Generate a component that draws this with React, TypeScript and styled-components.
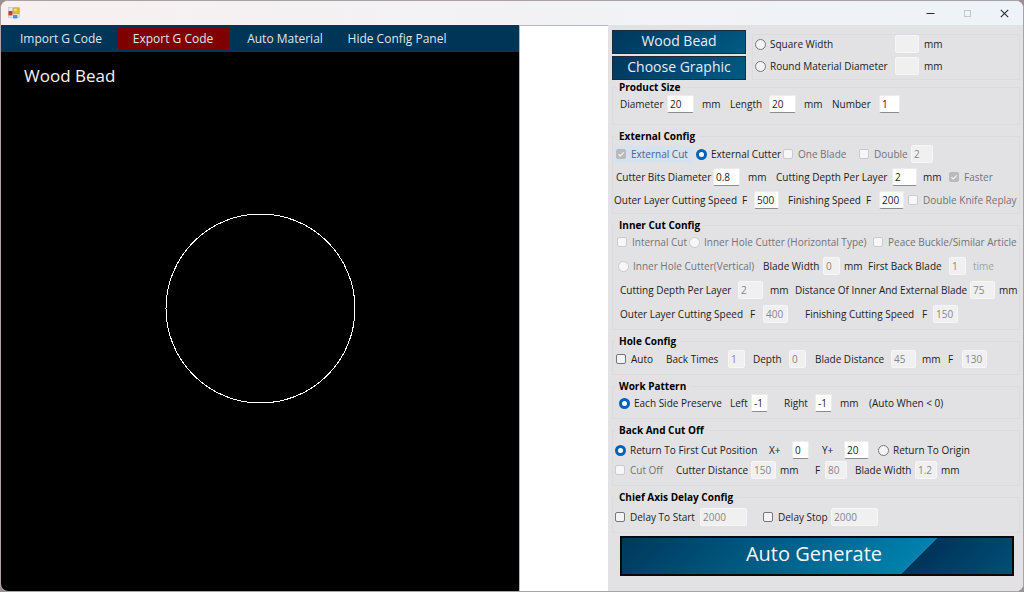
import React from "react";
import styled, { createGlobalStyle, css } from "styled-components";

const GlobalStyle = createGlobalStyle`
  * { box-sizing: border-box; }
  body {
    margin: 0;
    background: #9c9092;
    font-family: "Open Sans", "Noto Sans", sans-serif;
    font-size: 10px;
    line-height: 16px;
    color: #1c1c22;
  }
  button, input { font: inherit; color: inherit; margin: 0; }
`;

const AppWindow = styled.div`
  display: flex;
  flex-direction: column;
  min-height: 100vh;
  border: 1px solid #a9a2a6;
  border-radius: 8px;
  overflow: hidden;
  background: #ffffff;
`;

const TitleBar = styled.header`
  display: flex;
  align-items: center;
  justify-content: space-between;
  height: 24px;
  padding-left: 7px;
  background: linear-gradient(90deg, #f8f0f0 0%, #f3f2f4 40%, #f1f3f6 70%, #edf3f8 100%);
`;

const WindowControls = styled.div`
  display: flex;
`;

const ControlButton = styled.button`
  display: grid;
  place-items: center;
  width: 37px;
  height: 24px;
  padding: 0;
  border: 0;
  background: transparent;
  color: #2a2a2e;
  &:disabled { color: #c4c8cc; }
`;

const Workspace = styled.main`
  flex: 1;
  display: grid;
  grid-template-columns: minmax(0, 1fr) 89px 415px;
`;

const Viewer = styled.section`
  display: flex;
  flex-direction: column;
  background: #000000;
`;

const MenuBar = styled.nav`
  display: flex;
  align-items: center;
  height: 27px;
  padding-left: 4px;
  background: #003558;
`;

const MenuButton = styled.button<{ $active?: boolean }>`
  flex: 0 1 112px;
  height: 23px;
  padding: 0;
  border: 0;
  background: ${(p) => (p.$active ? "#800000" : "transparent")};
  color: #dfe6ee;
  font-size: 12px;
  white-space: nowrap;
`;

const Canvas = styled.div`
  flex: 1;
  display: grid;
`;

const CanvasTitle = styled.h1`
  grid-area: 1 / 1;
  align-self: start;
  margin: 0;
  padding: 12px 23px;
  color: #f4f4f4;
  font-size: 17px;
  font-weight: 400;
  line-height: 24px;
`;

const Preview = styled.svg`
  grid-area: 1 / 1;
  place-self: center;
  width: 192px;
  height: 192px;
  margin-bottom: 28px;
`;

const Gutter = styled.div`
  border-top: 1px solid #b4b8bc;
  border-left: 1px solid #b4b8bc;
  background: #ffffff;
`;

const ConfigPanel = styled.form`
  display: flex;
  flex-direction: column;
  gap: 4px;
  padding: 5px 3px 14px 4px;
  background: #e2e2e4;
`;

const MaterialSection = styled.div`
  display: grid;
  grid-template-columns: 134px 1fr;
  gap: 6px;
`;

const ShapeButtons = styled.div`
  display: grid;
  gap: 2px;
`;

const ShapeButton = styled.button`
  height: 24px;
  padding: 0 0 2px;
  border: 1px solid #1d2b36;
  background: linear-gradient(135deg, #00375d, #005b83);
  color: #e6eef4;
  font-size: 14px;
  line-height: 20px;
`;

const groupFrame = css`
  min-width: 0;
  margin: 0;
  border: 1px solid #dcdcdf;
`;

const MaterialGroup = styled.div`
  ${groupFrame}
  display: grid;
  gap: 4px;
  align-content: start;
  margin-top: 4px;
  padding-left: 2px;
`;

const Groups = styled.div`
  display: grid;
  gap: 4px;
  margin-top: -4px;
`;

const Group = styled.fieldset<{ $top?: number; $bottom?: number }>`
  ${groupFrame}
  padding: ${(p) => p.$top ?? 0}px 0 ${(p) => p.$bottom ?? 6}px 1px;
`;

const Legend = styled.legend`
  margin-left: 1px;
  padding: 0 4px;
  color: #000000;
  font-weight: 700;
  line-height: 15px;
`;

const Rows = styled.div<{ $gap?: number }>`
  display: grid;
  gap: ${(p) => p.$gap ?? 5}px;
`;

const Row = styled.div<{ $cols: string; $indent?: number }>`
  display: grid;
  grid-template-columns: ${(p) => p.$cols};
  align-items: center;
  height: 18px;
  padding-left: ${(p) => p.$indent ?? 0}px;
  white-space: nowrap;
`;

const Text = styled.label``;

const Unit = styled.span<{ $faded?: boolean }>`
  color: ${(p) => (p.$faded ? "#a2a2a6" : "inherit")};
`;

const NumberBox = styled.input<{ $width: number }>`
  width: ${(p) => p.$width}px;
  height: 18px;
  padding: 0 2px;
  border: 1px solid #ececee;
  border-bottom-color: #8c8c90;
  border-radius: 2px;
  background: #ffffff;
  &:disabled {
    border-color: #f6f6f6;
    background: #f0f0f0;
    color: #868688;
  }
`;

const ChoiceLabel = styled.label<{ $faded?: boolean; $hot?: boolean }>`
  display: flex;
  align-items: center;
  justify-self: start;
  gap: 5px;
  height: 17px;
  color: ${(p) => (p.$faded ? "#737377" : "inherit")};
  ${(p) =>
    p.$hot &&
    css`
      padding: 0 5px 0 2px;
      background: #d5e2f0;
      color: #47648c;
    `}
`;

const Mark = styled.input`
  flex: none;
  appearance: none;
  width: 10px;
  height: 10px;
  border: 1px solid #76767a;
  border-radius: 2px;
  background: #f3f3f4;
  &:disabled {
    border-color: #cbcbce;
    background: #f7f7f8;
  }
  &:checked:disabled {
    border-color: #bababd;
    background: #bababd;
  }
  &[type="radio"] {
    width: 11px;
    height: 11px;
    margin-right: -1px;
    border-radius: 50%;
  }
  &[type="radio"]:checked {
    border: 3px solid #0062b8;
    background: #ffffff;
  }
`;

const TickBox = styled.span`
  display: grid;
  flex: none;
  > * { grid-area: 1 / 1; }
`;

const Tick = styled.svg`
  width: 10px;
  height: 10px;
  pointer-events: none;
`;

const GenerateButton = styled.button`
  height: 40px;
  margin: -1px 6px 0 8px;
  padding: 0 6px 4px 0;
  border: 2px solid #05090c;
  background: linear-gradient(
    135deg,
    #00375b 0%,
    #005f88 40%,
    #0082ad 74%,
    #00335a 74%,
    #005077 100%
  );
  color: #f2f7fa;
  font-size: 20px;
  line-height: 28px;
`;

type ChoiceProps = {
  type: "checkbox" | "radio";
  name?: string;
  checked?: boolean;
  disabled?: boolean;
  hot?: boolean;
  children: React.ReactNode;
};

function Choice({ type, name, checked, disabled, hot, children }: ChoiceProps) {
  const mark = <Mark type={type} name={name} defaultChecked={checked} disabled={disabled} />;
  return (
    <ChoiceLabel $faded={disabled} $hot={hot}>
      {type === "checkbox" && checked ? (
        <TickBox>
          {mark}
          <Tick viewBox="0 0 10 10" fill="none" stroke="#f4f4f4" strokeWidth="1.2">
            <path d="M2.4 5.2 4.3 7 7.8 3.3" />
          </Tick>
        </TickBox>
      ) : (
        mark
      )}
      {children}
    </ChoiceLabel>
  );
}

function NumberField({ id, value = "", width, disabled }: { id: string; value?: string; width: number; disabled?: boolean }) {
  return <NumberBox id={id} type="text" defaultValue={value} $width={width} disabled={disabled} />;
}

function AppIcon() {
  return (
    <svg width="12" height="12" viewBox="0 0 12 12" aria-hidden="true">
      <rect x="0.5" y="0.5" width="11" height="10" fill="#e4e6ea" stroke="#b9bcc4" strokeWidth="0.6" />
      <rect x="0.5" y="4" width="4" height="4.4" fill="#c23a34" />
      <rect x="5" y="1" width="6" height="5.6" rx="0.5" fill="#e9bd2c" stroke="#b48a16" strokeWidth="0.5" />
      <rect x="6" y="1.6" width="2.6" height="2" fill="#f8e48a" />
      <rect x="5" y="8" width="4.4" height="3.4" rx="0.6" fill="#4f8fe0" />
    </svg>
  );
}

export default function App() {
  return (
    <>
      <GlobalStyle />
      <AppWindow>
        <TitleBar>
          <AppIcon />
          <WindowControls>
            <ControlButton type="button" aria-label="Minimize">
              <svg width="9" height="9" viewBox="0 0 9 9" stroke="currentColor">
                <path d="M0.5 4.5h8" />
              </svg>
            </ControlButton>
            <ControlButton type="button" aria-label="Maximize" disabled>
              <svg width="9" height="9" viewBox="0 0 9 9" fill="none" stroke="currentColor">
                <rect x="1.5" y="1.5" width="6" height="6" />
              </svg>
            </ControlButton>
            <ControlButton type="button" aria-label="Close">
              <svg width="9" height="9" viewBox="0 0 9 9" stroke="currentColor" strokeWidth="1.1">
                <path d="M0.8 0.8 8.2 8.2M8.2 0.8 0.8 8.2" />
              </svg>
            </ControlButton>
          </WindowControls>
        </TitleBar>

        <Workspace>
          <Viewer>
            <MenuBar>
              <MenuButton type="button">Import G Code</MenuButton>
              <MenuButton type="button" $active>Export G Code</MenuButton>
              <MenuButton type="button">Auto Material</MenuButton>
              <MenuButton type="button">Hide Config Panel</MenuButton>
            </MenuBar>
            <Canvas>
              <CanvasTitle>Wood Bead</CanvasTitle>
              <Preview viewBox="0 0 192 192" fill="none" stroke="#ffffff" shapeRendering="crispEdges">
                <circle cx="96.5" cy="96.5" r="94.5" />
              </Preview>
            </Canvas>
          </Viewer>

          <Gutter />

          <ConfigPanel>
            <MaterialSection>
              <ShapeButtons>
                <ShapeButton type="button">Wood Bead</ShapeButton>
                <ShapeButton type="button">Choose Graphic</ShapeButton>
              </ShapeButtons>
              <MaterialGroup>
                <Row $cols="140px 29px auto">
                  <Choice type="radio" name="material">Square Width</Choice>
                  <NumberBox aria-label="Square Width" $width={24} disabled />
                  <Unit>mm</Unit>
                </Row>
                <Row $cols="140px 29px auto">
                  <Choice type="radio" name="material">Round Material Diameter</Choice>
                  <NumberBox aria-label="Round Material Diameter" $width={24} disabled />
                  <Unit>mm</Unit>
                </Row>
              </MaterialGroup>
            </MaterialSection>

            <Groups>
              <Group $bottom={11}>
                <Legend>Product Size</Legend>
                <Row $indent={6} $cols="47px 35px 28px 39px 35px 28px 47px auto">
                  <Text htmlFor="diameter">Diameter</Text>
                  <NumberField id="diameter" value="20" width={27} />
                  <Unit>mm</Unit>
                  <Text htmlFor="length">Length</Text>
                  <NumberField id="length" value="20" width={27} />
                  <Unit>mm</Unit>
                  <Text htmlFor="number">Number</Text>
                  <NumberField id="number" value="1" width={21} />
                </Row>
              </Group>

              <Group $top={1} $bottom={4}>
                <Legend>External Config</Legend>
                <Rows>
                  <Row $cols="82px 87px 76px 52px auto">
                    <Choice type="checkbox" checked disabled hot>External Cut</Choice>
                    <Choice type="radio" name="external" checked>External Cutter</Choice>
                    <Choice type="checkbox" disabled>One Blade</Choice>
                    <Choice type="checkbox" disabled>Double</Choice>
                    <NumberBox aria-label="Double" defaultValue="2" $width={22} disabled />
                  </Row>
                  <Row $indent={2} $cols="97px 35px 28px 116px 31px 26px auto">
                    <Text htmlFor="bits">Cutter Bits Diameter</Text>
                    <NumberField id="bits" value="0.8" width={27} />
                    <Unit>mm</Unit>
                    <Text htmlFor="outer-depth">Cutting Depth Per Layer</Text>
                    <NumberField id="outer-depth" value="2" width={25} />
                    <Unit>mm</Unit>
                    <Choice type="checkbox" checked disabled>Faster</Choice>
                  </Row>
                  <Row $cols="128px 12px 34px 78px 13px 29px auto">
                    <Text htmlFor="outer-speed">Outer Layer Cutting Speed</Text>
                    <Unit>F</Unit>
                    <NumberField id="outer-speed" value="500" width={25} />
                    <Text htmlFor="finish-speed">Finishing Speed</Text>
                    <Unit>F</Unit>
                    <NumberField id="finish-speed" value="200" width={25} />
                    <Choice type="checkbox" disabled>Double Knife Replay</Choice>
                  </Row>
                </Rows>
              </Group>

              <Group>
                <Legend>Inner Cut Config</Legend>
                <Rows $gap={6}>
                  <Row $indent={3} $cols="72px 184px auto">
                    <Choice type="checkbox" disabled>Internal Cut</Choice>
                    <Choice type="radio" name="inner" disabled>Inner Hole Cutter (Horizontal Type)</Choice>
                    <Choice type="checkbox" disabled>Peace Buckle/Similar Article</Choice>
                  </Row>
                  <Row $indent={4} $cols="145px 60px 21px 24px 81px 24px auto">
                    <Choice type="radio" name="inner" disabled>Inner Hole Cutter(Vertical)</Choice>
                    <Text htmlFor="inner-width">Blade Width</Text>
                    <NumberField id="inner-width" value="0" width={17} disabled />
                    <Unit>mm</Unit>
                    <Text htmlFor="first-back">First Back Blade</Text>
                    <NumberField id="first-back" value="1" width={17} disabled />
                    <Unit $faded>time</Unit>
                  </Row>
                  <Row $indent={6} $cols="118px 32px 25px 175px 29px auto">
                    <Text htmlFor="inner-depth">Cutting Depth Per Layer</Text>
                    <NumberField id="inner-depth" value="2" width={25} disabled />
                    <Unit>mm</Unit>
                    <Text htmlFor="blade-gap">Distance Of Inner And External Blade</Text>
                    <NumberField id="blade-gap" value="75" width={25} disabled />
                    <Unit>mm</Unit>
                  </Row>
                  <Row $indent={6} $cols="130px 13px 42px 117px 11px auto">
                    <Text htmlFor="inner-speed">Outer Layer Cutting Speed</Text>
                    <Unit>F</Unit>
                    <NumberField id="inner-speed" value="400" width={25} disabled />
                    <Text htmlFor="inner-finish">Finishing Cutting Speed</Text>
                    <Unit>F</Unit>
                    <NumberField id="inner-finish" value="150" width={25} disabled />
                  </Row>
                </Rows>
              </Group>

              <Group $top={1}>
                <Legend>Hole Config</Legend>
                <Row $indent={2} $cols="50px 62px 25px 36px 26px 76px 31px 26px 14px auto">
                  <Choice type="checkbox">Auto</Choice>
                  <Text htmlFor="back-times">Back Times</Text>
                  <NumberField id="back-times" value="1" width={17} disabled />
                  <Text htmlFor="hole-depth">Depth</Text>
                  <NumberField id="hole-depth" value="0" width={17} disabled />
                  <Text htmlFor="blade-distance">Blade Distance</Text>
                  <NumberField id="blade-distance" value="45" width={25} disabled />
                  <Unit>mm</Unit>
                  <Text htmlFor="hole-speed">F</Text>
                  <NumberField id="hole-speed" value="130" width={25} disabled />
                </Row>
              </Group>

              <Group>
                <Legend>Work Pattern</Legend>
                <Row $indent={5} $cols="111px 21px 33px 31px 25px 29px auto">
                  <Choice type="radio" name="pattern" checked>Each Side Preserve</Choice>
                  <Text htmlFor="left">Left</Text>
                  <NumberField id="left" value="-1" width={17} />
                  <Text htmlFor="right">Right</Text>
                  <NumberField id="right" value="-1" width={17} />
                  <Unit>mm</Unit>
                  <Unit>(Auto When &lt; 0)</Unit>
                </Row>
              </Group>

              <Group $top={3}>
                <Legend>Back And Cut Off</Legend>
                <Rows $gap={2}>
                  <Row $indent={1} $cols="154px 23px 30px 22px 34px auto">
                    <Choice type="radio" name="return" checked>Return To First Cut Position</Choice>
                    <Text htmlFor="x-plus">X+</Text>
                    <NumberField id="x-plus" value="0" width={17} />
                    <Text htmlFor="y-plus">Y+</Text>
                    <NumberField id="y-plus" value="20" width={25} />
                    <Choice type="radio" name="return">Return To Origin</Choice>
                  </Row>
                  <Row $indent={1} $cols="61px 75px 29px 35px 10px 30px 60px 26px auto">
                    <Choice type="checkbox" disabled>Cut Off</Choice>
                    <Text htmlFor="cutter-distance">Cutter Distance</Text>
                    <NumberField id="cutter-distance" value="150" width={25} disabled />
                    <Unit>mm</Unit>
                    <Text htmlFor="cut-speed">F</Text>
                    <NumberField id="cut-speed" value="80" width={22} disabled />
                    <Text htmlFor="cut-width">Blade Width</Text>
                    <NumberField id="cut-width" value="1.2" width={22} disabled />
                    <Unit>mm</Unit>
                  </Row>
                </Rows>
              </Group>

              <Group $top={3}>
                <Legend>Chief Axis Delay Config</Legend>
                <Row $indent={1} $cols="85px 63px 68px auto">
                  <Choice type="checkbox">Delay To Start</Choice>
                  <NumberBox aria-label="Delay To Start" defaultValue="2000" $width={47} disabled />
                  <Choice type="checkbox">Delay Stop</Choice>
                  <NumberBox aria-label="Delay Stop" defaultValue="2000" $width={47} disabled />
                </Row>
              </Group>
            </Groups>

            <GenerateButton type="button">Auto Generate</GenerateButton>
          </ConfigPanel>
        </Workspace>
      </AppWindow>
    </>
  );
}
